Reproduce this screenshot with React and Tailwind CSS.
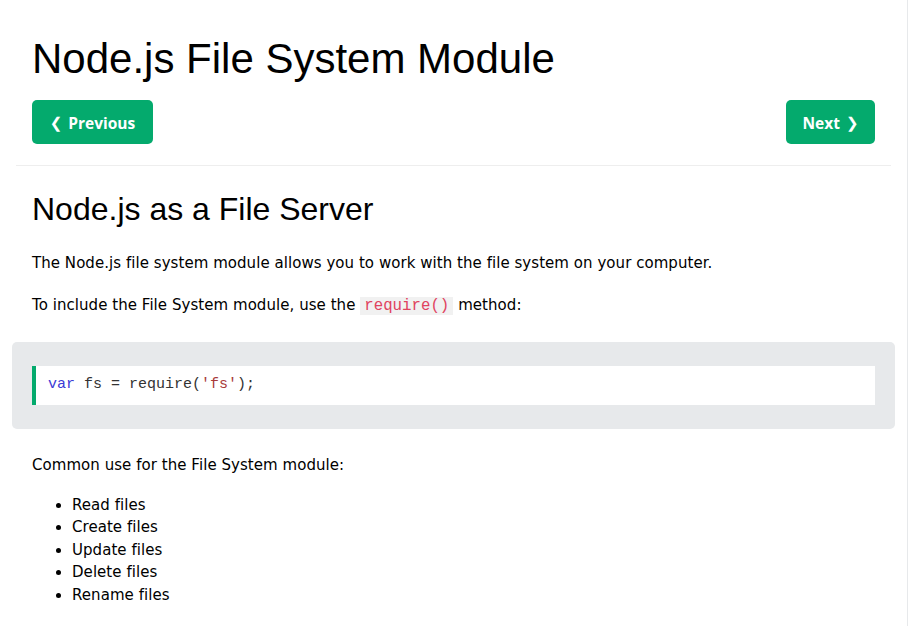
import React from "react";

export default function App() {
  return (
    <div className="w-[908px] min-h-[626px] bg-white border-r border-[#e7e9eb] pt-[27px] text-black font-['DejaVu_Sans',Verdana,sans-serif] text-[15px] leading-[22.5px] tracking-[0.05px]">
      <h1 className="px-8 text-[42px] leading-[63px] font-normal tracking-normal font-['Liberation_Sans',Arial,sans-serif]">
        Node.js File System Module
      </h1>

      <div className="mt-[10px] px-8 flex justify-between tracking-normal">
        <a className="w-[121px] h-[44px] pt-[2px] flex items-center justify-center gap-[6px] rounded-[5px] bg-[#04AA6D] text-white text-[15.5px] font-bold font-['Open_Sans',sans-serif]">
          <span className="font-['DejaVu_Sans',sans-serif] text-[15px]">❮</span>
          <span>Previous</span>
        </a>
        <a className="w-[89px] h-[44px] pt-[2px] flex items-center justify-center gap-[6px] rounded-[5px] bg-[#04AA6D] text-white text-[15.5px] font-bold font-['Open_Sans',sans-serif]">
          <span>Next</span>
          <span className="font-['DejaVu_Sans',sans-serif] text-[15px]">❯</span>
        </a>
      </div>

      <div className="mx-4 mt-[21px] h-px bg-[#eeeeee]" />

      <h2 className="mt-[19px] px-8 text-[32px] leading-[48px] font-normal tracking-normal font-['Liberation_Sans',Arial,sans-serif]">
        Node.js as a File Server
      </h2>

      <p className="mt-[19px] px-8">
        The Node.js file system module allows you to work with the file system on your computer.
      </p>

      <p className="mt-[19px] px-8">
        To include the File System module, use the{" "}
        <code className="px-[4px] bg-[#f1f1f1] text-[#e0435f] text-[15.75px] leading-none tracking-normal font-['Liberation_Mono','Courier_New',monospace]">
          require()
        </code>{" "}
        method:
      </p>

      <div className="mt-[26px] mx-3 rounded-[5px] bg-[#e7e9eb] px-5 py-6">
        <div className="h-[39px] flex items-center bg-white border-l-4 border-[#04AA6D] pl-3 text-[15px] tracking-normal text-[#333] font-['Liberation_Mono','Courier_New',monospace]">
          <span className="text-[#3b3bd6]">var</span>
          <span className="whitespace-pre"> fs = require(</span>
          <span className="text-[#a83a3a]">'fs'</span>
          <span>);</span>
        </div>
      </div>

      <p className="mt-[25px] px-8">Common use for the File System module:</p>

      <ul className="mt-[17px] pl-[72px] list-disc">
        <li>Read files</li>
        <li>Create files</li>
        <li>Update files</li>
        <li>Delete files</li>
        <li>Rename files</li>
      </ul>
    </div>
  );
}
